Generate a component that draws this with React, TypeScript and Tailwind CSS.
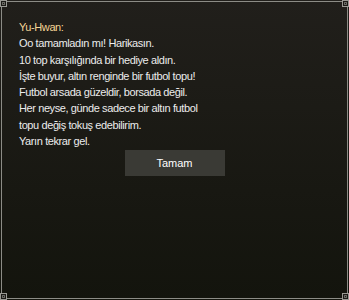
const lines = [
  "Oo tamamladın mı! Harikasın.",
  "10 top karşılığında bir hediye aldın.",
  "İşte buyur, altın renginde bir futbol topu!",
  "Futbol arsada güzeldir, borsada değil.",
  "Her neyse, günde sadece bir altın futbol",
  "topu değiş tokuş edebilirim.",
  "Yarın tekrar gel.",
];

function Corner({ className }: { className: string }) {
  return (
    <div className={`absolute w-[7px] h-[7px] border border-[#9a9a94] bg-[#1c1b17] ${className}`}>
      <div className="absolute left-[1px] top-[1px] w-[3px] h-[3px] border border-[#6a6a64]" />
    </div>
  );
}

export default function App() {
  return (
    <div className="relative w-[349px] h-[300px] overflow-hidden bg-gradient-to-b from-[#211f1b] to-[#13140d] font-['Liberation_Sans',sans-serif]">
      <div className="absolute inset-[1px] border border-[#8c8c86]" />
      <Corner className="left-0 top-0" />
      <Corner className="right-0 top-0" />
      <Corner className="left-0 bottom-0" />
      <Corner className="right-0 bottom-0" />

      <div className="pt-[19px] pl-[19px] text-[11px] leading-[16.3px] tracking-[-0.4px] text-[#ececec]">
        <div className="text-[#f4d596]">Yu-Hwan:</div>
        {lines.map((l, i) => (
          <div key={i}>{l}</div>
        ))}
      </div>

      <div className="flex justify-center mt-[1px]">
        <div className="w-[100px] h-[26px] bg-[#3a3a35] flex items-center justify-center text-[11px] text-white">
          Tamam
        </div>
      </div>
    </div>
  );
}
